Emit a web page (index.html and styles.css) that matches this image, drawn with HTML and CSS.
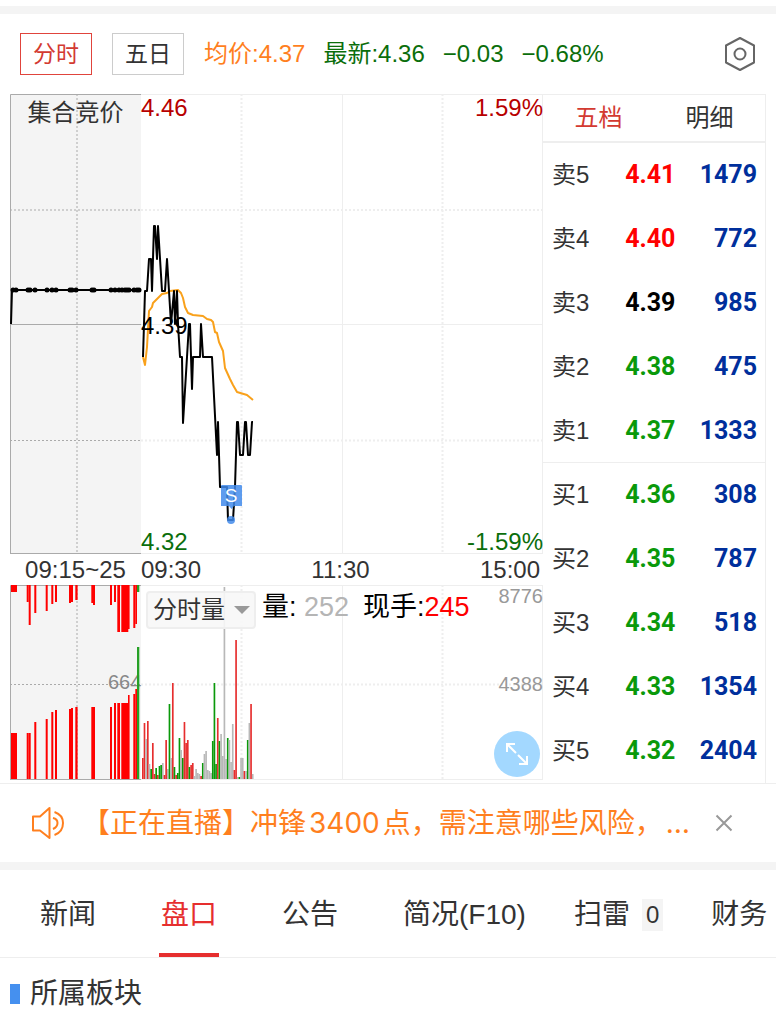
FILE: index.html
```
<!DOCTYPE html>
<html lang="zh-CN">
<head>
  <meta charset="UTF-8">
  <meta name="viewport" content="width=device-width, initial-scale=1.0">
  <title>分时</title>
  <link rel="stylesheet" href="styles.css">
</head>
<body>
  <div class="strip strip-top"></div>

  <header class="toolbar">
    <button type="button" class="period active">分时</button>
    <button type="button" class="period">五日</button>
    <div class="summary">
      <span class="average">均价:4.37</span>
      <span>最新:4.36</span>
      <span>−0.03</span>
      <span>−0.68%</span>
    </div>
    <button type="button" class="icon-btn settings" aria-label="设置">
      <svg width="32" height="36" viewBox="0 0 32 36" fill="none" stroke="#666" stroke-width="2">
        <path d="M16 2 L30 9.500 V26.500 L16 34 L2 26.500 V9.500 Z" stroke-linejoin="round"/>
        <circle cx="16" cy="18" r="5.500"/>
      </svg>
    </button>
  </header>

  <main class="quote">
    <section class="charts">
      <div class="price-chart">
        <svg class="plot" viewBox="0 0 533 460">
          <rect width="131" height="459" fill="#f4f4f4"/>
          <g class="grid-light">
            <path d="M131 .5 H533 M131 230.500 H533 M131 459.500 H533 M332.500 0 V460 M532.500 0 V460"/>
            <path class="dotted" d="M131 116 H533 M131 346.500 H533 M231.500 0 V460 M432.500 0 V460"/>
          </g>
          <g class="grid-dark">
            <path d="M.5 460 V.5 H131 M0 230.500 H131 M0 459.500 H131"/>
            <path class="dotted" d="M0 116 H131 M0 346.500 H131 M67 0 V460"/>
          </g>
          <polyline class="line" points="1,230 2,196 129,196"/>
          <g id="auction-dots"></g>
          <polyline class="line-average" points="133,263 135,271 137,253 139,217 142,213 143,209 148,204 152,200 157,199 160,197 168,196 171,199 173,204 175,213 178,219 183,221 193,222 197,225 201,226 203,228 205,238 207,239 209,248 213,257 215,274 220,285 223,291 227,298 237,301 243,306"/>
          <polyline class="line" points="133,263 135,197 137,197 139,165 141,165 142,197 144,132 145,132 147,165 148,132 152,197 155,197 157,165 159,197 161,230 164,197 165,230 167,197 168,230 170,263 172,263 173,329 179,230 180,230 182,295 183,263 190,263 191,230 193,263 202,263 207,361 208,328 210,393 217,393 218,426 223,426 225,393 227,328 228,328 230,361 233,361 235,328 236,328 238,361 240,361 242,328 243,328"/>
          <g class="marker">
            <path d="M212 391 H231 Q232 391 232 392 V412 H224 L221.500 415 L219 412 H211 V392 Q211 391 212 391 Z"/>
            <circle cx="221" cy="426" r="4"/>
            <text x="221" y="408" text-anchor="middle">S</text>
          </g>
        </svg>
        <div class="labels">
          <span class="auction-title">集合竞价</span>
          <div class="scale">
            <div class="scale-row up"><span>4.46</span><span>1.59%</span></div>
            <div class="scale-row">4.39</div>
            <div class="scale-row down"><span>4.32</span><span>-1.59%</span></div>
          </div>
        </div>
      </div>

      <div class="times">
        <span class="auction-time">09:15~25</span>
        <div class="session">
          <span>09:30</span>
          <span>11:30</span>
          <span>15:00</span>
        </div>
      </div>

      <div class="volume-chart">
        <svg class="plot" viewBox="0 0 533 195">
          <rect width="131" height="195" fill="#f4f4f4"/>
          <g class="grid-light">
            <path d="M131 .5 H533 M131 194.500 H533 M332.500 0 V195 M532.500 0 V195"/>
            <path class="dotted" d="M131 99.500 H533 M231.500 0 V195 M432.500 0 V195"/>
          </g>
          <g class="grid-dark">
            <path d="M.5 195 V.5 H131 M0 194.500 H131"/>
            <path class="dotted" d="M0 99.500 H131 M67 0 V195"/>
          </g>
          <text class="auction-max" x="98" y="104">664</text>
          <g id="auction-bars"></g>
          <g id="volume-bars"></g>
        </svg>
        <div class="labels">
          <div class="volume-info">
            <div class="select-box">
              <select aria-label="指标">
                <option>分时量</option>
              </select>
            </div>
            <span>量: <span class="flat">252</span></span>
            <span>现手:<span class="rise">245</span></span>
          </div>
          <div class="volume-scale">
            <span>8776</span>
            <span>4388</span>
          </div>
        </div>
        <button type="button" class="expand" aria-label="全屏">
          <svg width="24" height="24" viewBox="0 0 24 24" fill="none" stroke="#fff" stroke-width="2">
            <path d="M2 10 V2 H10 M2 2 L11 11 M22 14 V22 H14 M22 22 L13 13"/>
          </svg>
        </button>
      </div>
    </section>

    <section class="book">
      <div class="book-tabs">
        <button type="button" class="active">五档</button>
        <button type="button">明细</button>
      </div>
      <table>
        <tbody>
          <tr><th scope="row">卖5</th><td class="rise">4.41</td><td>1479</td></tr>
          <tr><th scope="row">卖4</th><td class="rise">4.40</td><td>772</td></tr>
          <tr><th scope="row">卖3</th><td class="even">4.39</td><td>985</td></tr>
          <tr><th scope="row">卖2</th><td class="fall">4.38</td><td>475</td></tr>
          <tr class="sell-last"><th scope="row">卖1</th><td class="fall">4.37</td><td>1333</td></tr>
        </tbody>
        <tbody>
          <tr><th scope="row">买1</th><td class="fall">4.36</td><td>308</td></tr>
          <tr><th scope="row">买2</th><td class="fall">4.35</td><td>787</td></tr>
          <tr><th scope="row">买3</th><td class="fall">4.34</td><td>518</td></tr>
          <tr><th scope="row">买4</th><td class="fall">4.33</td><td>1354</td></tr>
          <tr><th scope="row">买5</th><td class="fall">4.32</td><td>2404</td></tr>
        </tbody>
      </table>
    </section>
  </main>

  <div class="notice">
    <svg class="speaker" width="34" height="34" viewBox="0 0 34 34" fill="none" stroke="#ff7f1e" stroke-width="2" stroke-linejoin="round">
      <path d="M2 10.500 H9 L18.500 2 V32 L9 24.500 H2 Z"/>
      <path d="M22 12 Q26.500 13 26.500 17 Q26.500 21 22 23 M23.500 6 Q32 9 32 17 Q32 26 23.500 29"/>
    </svg>
    <a href="#" class="notice-text">【正在直播】冲锋<span class="points">3400</span>点，需注意哪些风险，<span class="points">…</span></a>
    <button type="button" class="icon-btn" aria-label="关闭">
      <svg width="18" height="18" viewBox="0 0 18 18" stroke="#999" stroke-width="2">
        <path d="M1.500 1.500 L16.500 16.500 M16.500 1.500 L1.500 16.500"/>
      </svg>
    </button>
  </div>

  <div class="strip"></div>

  <nav class="tabs">
    <a href="#">新闻</a>
    <a href="#" class="active">盘口</a>
    <a href="#">公告</a>
    <a href="#">简况(F10)</a>
    <a href="#">扫雷<span class="count">0</span></a>
    <a href="#">财务</a>
  </nav>

  <h2 class="section-title">所属板块</h2>

  <script src="chart.js"></script>
</body>
</html>
```
FILE: styles.css
```
body {
  font-family: "Liberation Sans", "Noto Sans CJK SC", sans-serif;
  margin: 0;
  color: #333;
  background-color: #fff;
  font-size: 24px;
  line-height: 28px;
}

button, select {
  font: inherit;
  color: inherit;
  margin: 0;
  padding: 0;
  border: none;
  background: none;
  cursor: pointer;
}

a {
  color: inherit;
  text-decoration: none;
}

svg {
  display: block;
}

.strip {
  height: 8px;
  background-color: #f4f4f4;
}

.strip-top {
  border-top: 6px solid #fff;
}

/* Toolbar */
.toolbar {
  display: flex;
  align-items: center;
  gap: 20px;
  height: 80px;
  padding: 0 20px;
}

.period {
  box-sizing: border-box;
  width: 72px;
  height: 42px;
  border: 1px solid #ccc;
  font-size: 23px;
}

.period.active {
  color: #d33a31;
  border-color: #e0443c;
}

.summary {
  display: flex;
  gap: 18px;
  color: #0b6e0b;
  white-space: nowrap;
}

.summary .average {
  color: #ff7f1e;
}

.icon-btn {
  display: flex;
  align-items: center;
}

.settings {
  margin-left: auto;
}

/* Charts and order book */
.quote {
  display: grid;
  grid-template-columns: minmax(0, 533fr) minmax(0, 223fr);
  padding: 0 10px;
  border-bottom: 1px solid #eee;
}

.price-chart,
.volume-chart {
  position: relative;
}

.plot {
  width: 100%;
  height: auto;
}

.grid-light,
.grid-dark {
  fill: none;
  stroke: #eee;
}

.grid-dark {
  stroke: #aaa;
}

.dotted {
  stroke-width: 2;
  stroke-dasharray: 2 2;
}

.grid-dark .dotted {
  stroke-width: 1;
}

.line,
.line-average {
  fill: none;
  stroke: #000;
  stroke-width: 2;
  stroke-linejoin: round;
}

.line-average {
  stroke: #f9a11b;
}

.marker {
  fill: rgba(66, 139, 235, 0.85);
}

.marker text {
  fill: #fff;
  font-size: 19px;
}

.auction-max {
  fill: #888;
  font-size: 20px;
}

.labels {
  position: absolute;
  inset: 0;
  display: grid;
  grid-template-columns: 131fr 402fr;
}

.auction-title {
  padding-top: 5px;
  text-align: center;
}

.scale {
  display: flex;
  flex-direction: column;
  justify-content: space-between;
  color: #000;
}

.scale-row {
  display: flex;
  justify-content: space-between;
}

.scale-row.up {
  color: #b80000;
}

.scale-row.down {
  color: #0b6e0b;
  line-height: 24px;
}

.times {
  display: grid;
  grid-template-columns: 131fr 402fr;
  line-height: 31px;
}

.auction-time {
  text-align: center;
}

.session {
  display: flex;
  justify-content: space-between;
  padding-right: 3px;
}

.volume-chart .labels {
  display: flex;
  justify-content: space-between;
}

.volume-info {
  display: flex;
  align-items: flex-start;
  gap: 14px;
  margin-left: 25.5%;
  padding-top: 6px;
  color: #000;
  font-size: 27px;
  line-height: 32px;
  white-space: nowrap;
}

.select-box {
  position: relative;
  margin-right: -8px;
}

.select-box::after {
  content: "";
  position: absolute;
  top: 15px;
  right: 6px;
  border: 8px solid transparent;
  border-top-color: #999;
  border-bottom: none;
  pointer-events: none;
}

.select-box select {
  appearance: none;
  box-sizing: border-box;
  width: 110px;
  height: 38px;
  padding-left: 5px;
  border: 2px solid #eee;
  border-radius: 4px;
  background-color: rgba(247, 247, 247, 0.9);
  color: #333;
  font-size: 24px;
}

.volume-info .flat {
  color: #b5b5b5;
}

.volume-scale {
  display: flex;
  flex-direction: column;
  gap: 66px;
  color: #999;
  font-size: 20px;
  line-height: 22px;
}

.expand {
  position: absolute;
  right: 3px;
  bottom: 3px;
  display: flex;
  align-items: center;
  justify-content: center;
  width: 46px;
  height: 46px;
  border-radius: 50%;
  background-color: #a3d8ff;
}

.book {
  border: 1px solid #eee;
  border-width: 1px 1px 0 0;
}

.book-tabs {
  display: grid;
  grid-template-columns: 1fr 1fr;
  height: 46px;
  border-bottom: 2px solid #eee;
}

.book-tabs .active {
  color: #d33a31;
}

.book table {
  width: 100%;
  table-layout: fixed;
  border-spacing: 0;
}

.book th,
.book td {
  box-sizing: border-box;
  height: 64px;
  padding: 0;
  text-align: left;
}

.book th {
  width: 37%;
  padding-left: 9px;
  font-weight: normal;
}

.book td {
  font-family: Roboto, sans-serif;
  font-size: 25px;
  font-weight: bold;
}

.book td:last-child {
  padding-right: 8px;
  text-align: right;
  color: #002f9c;
}

.sell-last th,
.sell-last td {
  border-bottom: 1px solid #eee;
}

.rise {
  color: #ff0000;
}

.even {
  color: #000;
}

.fall {
  color: #0a990a;
}

/* Live notice */
.notice {
  display: flex;
  align-items: center;
  height: 78px;
  padding: 0 43px 0 31px;
}

.notice-text {
  flex: 1;
  padding-left: 17px;
  color: #ff7f1e;
  font-size: 28px;
  white-space: nowrap;
}

.points {
  font-family: Inter, sans-serif;
  margin: 0 3px;
}

/* Bottom tabs */
.tabs {
  display: flex;
  gap: 48px;
  height: 84px;
  padding: 3px 0 0 40px;
  border-bottom: 1px solid #eee;
  font-size: 28px;
  white-space: nowrap;
  overflow: hidden;
}

.tabs a {
  position: relative;
  display: flex;
  align-items: center;
}

.tabs a:nth-child(-n+3) {
  margin-right: 17px;
}

.tabs .active {
  color: #e62e2e;
}

.tabs .active::after {
  content: "";
  position: absolute;
  left: -2px;
  right: -2px;
  bottom: 0;
  height: 4px;
  background-color: #e62e2e;
}

.count {
  margin-left: 12px;
  padding: 2px 4px;
  background-color: #f4f4f4;
  font-size: 24px;
}

.section-title {
  display: flex;
  align-items: center;
  gap: 10px;
  margin: 0;
  padding: 20px 10px;
  font-size: 28px;
  font-weight: normal;
  line-height: 32px;
}

.section-title::before {
  content: "";
  width: 10px;
  height: 20px;
  background-color: #4590ef;
}
```
FILE: chart.js
```
const SVG_NS = 'http://www.w3.org/2000/svg';
const COLORS = { r: '#e62e2e', g: '#0a990a', x: '#b8b8b8', R: '#ff0000', G: '#25a025' };

function addShape(parent, name, attrs) {
  const shape = document.createElementNS(SVG_NS, name);
  Object.keys(attrs).forEach(key => shape.setAttribute(key, attrs[key]));
  parent.appendChild(shape);
}

// Auction matches
const dots = document.getElementById('auction-dots');
[3, 6, 18, 20, 25, 37, 42, 46, 60, 62, 66, 82, 84, 101, 105, 109, 112, 115, 117, 119, 124, 127, 129].forEach(x => {
  addShape(dots, 'circle', { cx: x, cy: 196, r: 2.5 });
});

// Auction bars: color, x, width, height of the top bar, start of the bottom bar
const auctionBars = document.getElementById('auction-bars');
[
  ['R', 1, 6, 7, 148], ['R', 16.7, 2, 17, 148], ['R', 18.7, 2, 40, 148],
  ['R', 24.3, 2, 28, 137], ['R', 35.7, 2, 26, 134], ['R', 41.3, 2, 19, 127],
  ['R', 45, 2, 17, 125], ['R', 59, 2, 18, 124], ['R', 61, 2, 17, 123],
  ['R', 65.3, 2.3, 15, 122], ['R', 81.3, 2, 18, 122], ['R', 83, 2, 20, 122],
  ['R', 100, 2, 20, 122], ['R', 104, 2, 17, 118], ['R', 107.3, 2.7, 47, 118],
  ['R', 111.3, 7, 47, 118], ['R', 118, 1.6, 44, 110], ['R', 123.3, 2, 43, 109],
  ['R', 125.3, 1.7, 39, 104], ['G', 127, 2.3, 7, 62]
].forEach(([color, x, width, top, start]) => {
  addShape(auctionBars, 'rect', { x, y: 0, width, height: top, fill: COLORS[color] });
  addShape(auctionBars, 'rect', { x, y: start, width, height: 194 - start, fill: COLORS[color] });
});

// Minute volumes: color and height
const volumes = 'r21 r56 x40 r58 x15 g10 r36 r5 g11 r4 g13 g14 x16 r4 r39 x10 g75 x21 r96 g12 r4 g6 g41 x29 g21 r57 r36 r39 g12 r14 r16 x3 x10 x6 x5 r3 g16 x25 x28 x9 x8 x6 g38 g96 g15 r61 g38 x45 x23 x192 x20 g41 x39 x17 x55 r9 r139 x2 g2 x21 x21 r8 x8 g39 x56 r75 x5';
const volumeBars = document.getElementById('volume-bars');
volumes.split(' ').forEach((item, i) => {
  const height = Number(item.slice(1));
  addShape(volumeBars, 'rect', {
    x: 132 + i * 1.665,
    y: 194 - height,
    width: 1.665,
    height,
    fill: COLORS[item[0]]
  });
});
```
